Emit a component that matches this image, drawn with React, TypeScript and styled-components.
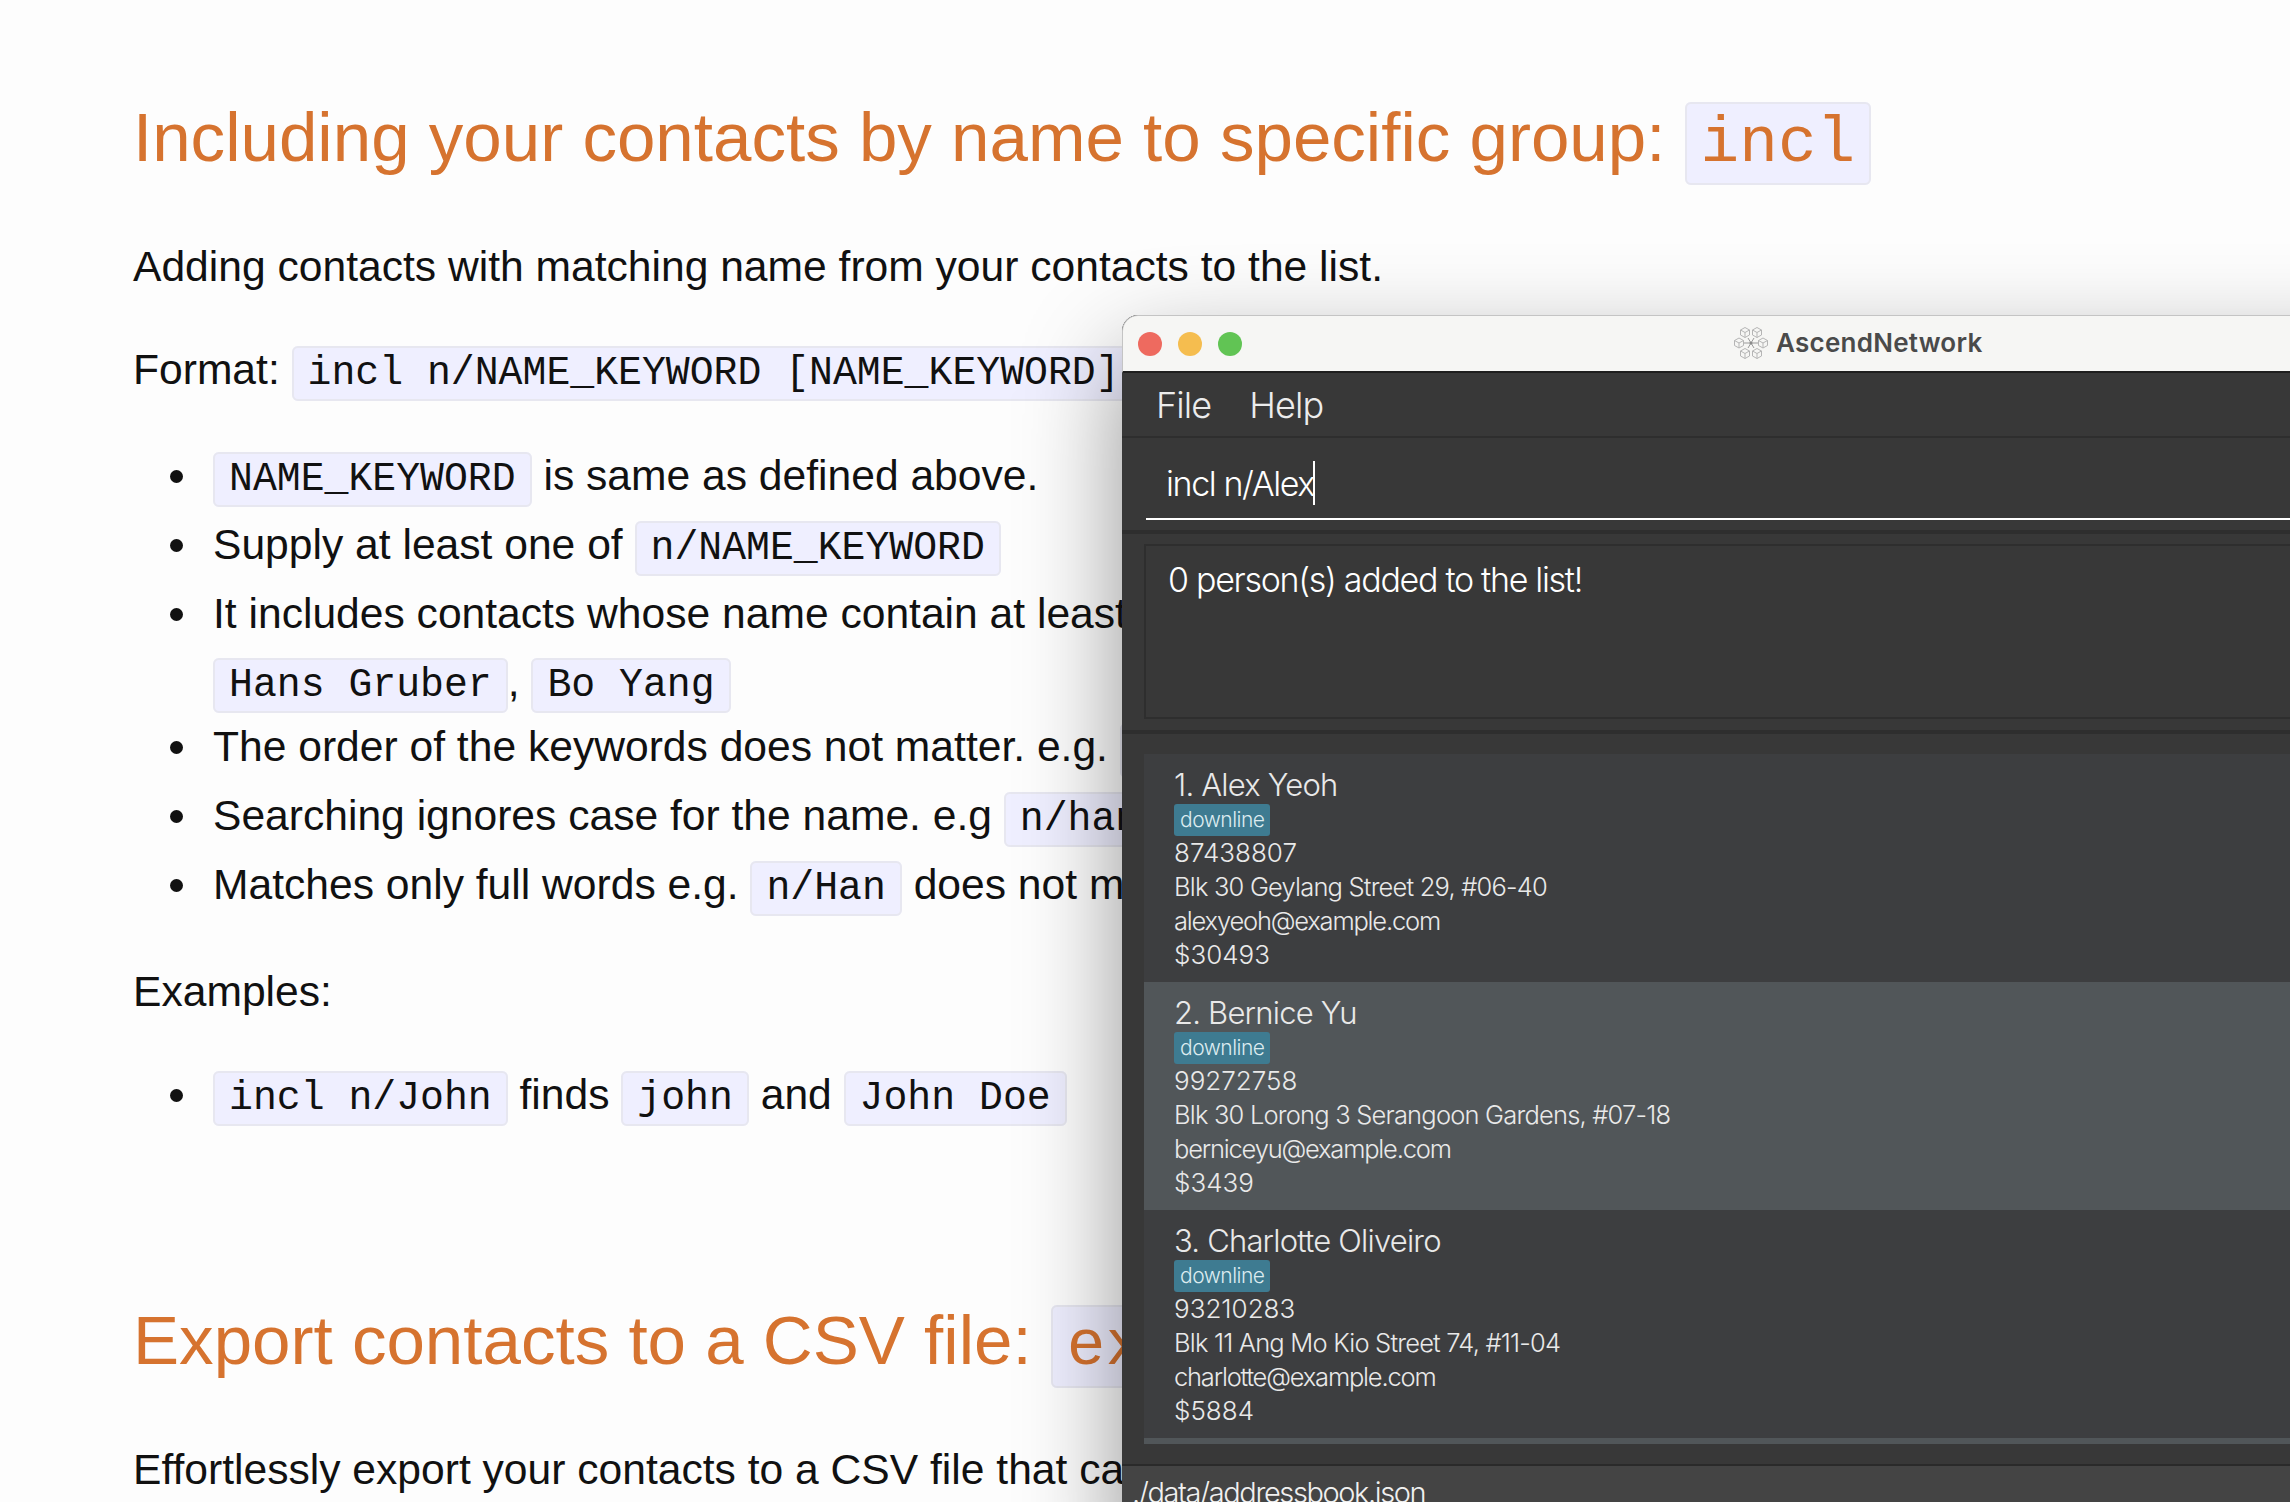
import { ReactElement } from 'react'
import styled, { createGlobalStyle } from 'styled-components'

const GlobalStyle = createGlobalStyle`
	html, body {
		margin: 0;
		padding: 0;
		background: #fdfdfd;
	}
`

const Page = styled.div`
	position: relative;
	width: 2290px;
	height: 1502px;
	overflow: hidden;
	background: #fdfdfd;
`

const Doc = styled.main`
	padding: 92px 0 0 133px;
	font-family: 'Liberation Sans', Arial, sans-serif;
	font-size: 42.6px;
	line-height: 64px;
	color: #111;
	white-space: nowrap;
`

const Code = styled.code`
	font-family: 'Liberation Mono', 'Courier New', monospace;
	font-size: 39.8px;
	padding: 3px 14px;
	background: #efefff;
	border: 2px solid #e7e7f0;
	border-radius: 6px;
`

const Heading = styled.h1<{ $top?: number }>`
	margin: ${(p) => p.$top ?? 0}px 0 0;
	font-size: 69.1px;
	line-height: 90px;
	font-weight: 400;
	color: #d6732f;

	${Code} {
		font-size: 64.4px;
	}
`

const Para = styled.p<{ $top: number }>`
	margin: ${(p) => p.$top}px 0 0;
`

const List = styled.ul<{ $top: number }>`
	margin: ${(p) => p.$top}px 0 0;
	padding: 0 0 0 80px;
	list-style: none;
`

const Item = styled.li`
	position: relative;

	&::before {
		content: '';
		position: absolute;
		left: -43px;
		top: 27px;
		width: 13px;
		height: 13px;
		border-radius: 50%;
		background: #111;
	}
`

const WrappedLine = styled.span`
	display: block;
	margin: 4px 0 -4px;
`

const Window = styled.section`
	position: absolute;
	left: 1122px;
	top: 315px;
	width: 1300px;
	height: 1240px;
	display: flex;
	flex-direction: column;
	background: #383838;
	border-radius: 16px 16px 0 0;
	box-shadow: 0 40px 100px rgba(0, 0, 0, 0.42);
	overflow: hidden;
	font-family: Inter, 'Noto Sans', sans-serif;
`

const TitleBar = styled.header`
	position: relative;
	flex: none;
	height: 58px;
	box-sizing: border-box;
	display: flex;
	align-items: center;
	padding-left: 15px;
	gap: 16px;
	background: #f6f6f4;
	border: 1px solid #c4c4c4;
	border-bottom: 2px solid #1e1e1e;
	border-radius: 16px 16px 0 0;
`

const Light = styled.span<{ $color: string }>`
	width: 24px;
	height: 24px;
	border-radius: 50%;
	background: ${(p) => p.$color};
`

const Title = styled.div`
	position: absolute;
	left: 611px;
	top: 10px;
	display: flex;
	align-items: center;
	gap: 8px;
	font-size: 26px;
	line-height: 34px;
	font-weight: 600;
	letter-spacing: 0.25px;
	color: #4a4a4a;
`

const MenuBar = styled.nav`
	flex: none;
	height: 65px;
	box-sizing: border-box;
	display: flex;
	align-items: center;
	gap: 38px;
	padding-left: 34px;
	font-size: 36px;
	font-weight: 300;
	letter-spacing: -0.9px;
	color: #ececec;
	border-bottom: 2px solid #2e2e2e;
`

const CommandPane = styled.div`
	flex: none;
	height: 96px;
	box-sizing: border-box;
	padding: 0 0 10px 24px;
	display: flex;
	flex-direction: column;
	justify-content: flex-end;
	border-bottom: 4px solid #2e2e2e;
`

const CommandBox = styled.div`
	height: 72px;
	box-sizing: border-box;
	padding-left: 20px;
	display: flex;
	align-items: center;
	border-bottom: 2px solid #fff;
	font-size: 34px;
	font-weight: 300;
	letter-spacing: -1.4px;
	color: #fff;
`

const Caret = styled.span`
	display: inline-block;
	width: 2px;
	height: 44px;
	margin-left: -1px;
	background: #fff;
`

const ResultPane = styled.div`
	flex: none;
	height: 200px;
	box-sizing: border-box;
	padding: 10px 0 11px 22px;
	border-bottom: 4px solid #2e2e2e;
`

const ResultBox = styled.div`
	height: 100%;
	box-sizing: border-box;
	padding: 12px 0 0 22px;
	border: 2px solid #2e2e2e;
	font-size: 34px;
	line-height: 44px;
	font-weight: 300;
	letter-spacing: -1.3px;
	color: #fff;
`

const ListPane = styled.div`
	flex: none;
	height: 732px;
	box-sizing: border-box;
	padding: 20px 0 20px 22px;
	border-bottom: 2px solid #2a2a2a;
`

const ListScroll = styled.div`
	height: 100%;
	overflow: hidden;
`

const Card = styled.article<{ $even: boolean }>`
	height: 228px;
	box-sizing: border-box;
	padding: 12px 0 0 30px;
	background: ${(p) => (p.$even ? '#515659' : '#3d3e40')};
	color: #e9e9e9;
`

const Name = styled.div`
	font-size: 31px;
	line-height: 38px;
	font-weight: 300;
	letter-spacing: -0.8px;
`

const Tag = styled.span`
	display: block;
	width: fit-content;
	box-sizing: border-box;
	height: 32px;
	padding: 0 5px 0 6px;
	border-radius: 3px;
	background: #3e7b91;
	color: #dcebf0;
	font-size: 21px;
	line-height: 32px;
	font-weight: 300;
	letter-spacing: -0.5px;
`

const Detail = styled.div<{ $tracking: number; $size?: number }>`
	font-size: ${(p) => p.$size ?? 25.5}px;
	line-height: 34px;
	font-weight: 300;
	letter-spacing: ${(p) => p.$tracking}px;
`

const StatusBar = styled.footer`
	flex: none;
	height: 60px;
	padding-left: 10px;
	background: #444444;
	color: #f0f0f0;
	font-size: 29px;
	line-height: 54px;
	font-weight: 300;
	letter-spacing: -1.4px;
`

const cubes = [
	[-6, -10.5],
	[6, -10.5],
	[-12, 0],
	[12, 0],
	[-6, 10.5],
	[6, 10.5],
]

const Logo = (): ReactElement => (
	<svg width="34" height="32" viewBox="-17 -16 34 32" fill="none" stroke="#b5b5b5" strokeWidth="1">
		{cubes.map(([x, y]) => (
			<path
				key={`${x}-${y}`}
				transform={`translate(${x} ${y})`}
				d="M0 -5 L4.5 -2.5 V2.5 L0 5 L-4.5 2.5 V-2.5 Z M-4.5 -2.5 L0 0 L4.5 -2.5 M0 0 V5"
			/>
		))}
		<path d="M-7 0 H7 M-3 -5 L3 5 M3 -5 L-3 5" stroke="#9a9a9a" />
		<circle r="1.5" fill="#8a8a8a" stroke="none" />
	</svg>
)

const people = [
	{ name: '1. Alex Yeoh', phone: '87438807', address: 'Blk 30 Geylang Street 29, #06-40', email: 'alexyeoh@example.com', money: '$30493' },
	{ name: '2. Bernice Yu', phone: '99272758', address: 'Blk 30 Lorong 3 Serangoon Gardens, #07-18', email: 'berniceyu@example.com', money: '$3439' },
	{ name: '3. Charlotte Oliveiro', phone: '93210283', address: 'Blk 11 Ang Mo Kio Street 74, #11-04', email: 'charlotte@example.com', money: '$5884' },
	{ name: '4. David Li', phone: '91031282', address: 'Blk 436 Serangoon Gardens Street 26, #16-43', email: 'lidavid@example.com', money: '$2300' },
]

const App = (): ReactElement => {
	return (
		<Page>
			<GlobalStyle />
			<Doc>
				<Heading>
					Including your contacts by name to specific group: <Code>incl</Code>
				</Heading>
				<Para $top={45}>Adding contacts with matching name from your contacts to the list.</Para>
				<Para $top={39}>
					Format: <Code>incl n/NAME_KEYWORD [NAME_KEYWORD]...</Code>
				</Para>
				<List $top={37}>
					<Item>
						<Code>NAME_KEYWORD</Code> is same as defined above.
					</Item>
					<Item>
						Supply at least one of <Code>n/NAME_KEYWORD</Code>
					</Item>
					<Item>
						It includes contacts whose name contain at least one keyword. e.g.
						<WrappedLine>
							<Code>Hans Gruber</Code>, <Code>Bo Yang</Code>
						</WrappedLine>
					</Item>
					<Item>
						The order of the keywords does not matter. e.g. <Code>Hans Bo</Code>
					</Item>
					<Item>
						Searching ignores case for the name. e.g <Code>n/hans</Code>
					</Item>
					<Item>
						Matches only full words e.g. <Code>n/Han</Code> does not match <Code>Hans</Code>
					</Item>
				</List>
				<Para $top={38}>Examples:</Para>
				<List $top={39}>
					<Item>
						<Code>incl n/John</Code> finds <Code>john</Code> and <Code>John Doe</Code>
					</Item>
				</List>
				<Heading $top={164}>
					Export contacts to a CSV file: <Code>export</Code>
				</Heading>
				<Para $top={45}>Effortlessly export your contacts to a CSV file that can be opened anywhere.</Para>
			</Doc>
			<Window>
				<TitleBar>
					<Light $color="#ee6a5f" />
					<Light $color="#f5bd4f" />
					<Light $color="#61c454" />
					<Title>
						<Logo />
						AscendNetwork
					</Title>
				</TitleBar>
				<MenuBar>
					<span>File</span>
					<span>Help</span>
				</MenuBar>
				<CommandPane>
					<CommandBox>
						incl n/Alex
						<Caret />
					</CommandBox>
				</CommandPane>
				<ResultPane>
					<ResultBox>0 person(s) added to the list!</ResultBox>
				</ResultPane>
				<ListPane>
					<ListScroll>
						{people.map((p, i) => (
							<Card key={p.name} $even={i % 2 === 1}>
								<Name>{p.name}</Name>
								<Tag>downline</Tag>
								<Detail $size={26} $tracking={0}>{p.phone}</Detail>
								<Detail $tracking={-0.8}>{p.address}</Detail>
								<Detail $tracking={-1.2}>{p.email}</Detail>
								<Detail $size={26} $tracking={0}>{p.money}</Detail>
							</Card>
						))}
					</ListScroll>
				</ListPane>
				<StatusBar>./data/addressbook.json</StatusBar>
			</Window>
		</Page>
	)
}

export default App
